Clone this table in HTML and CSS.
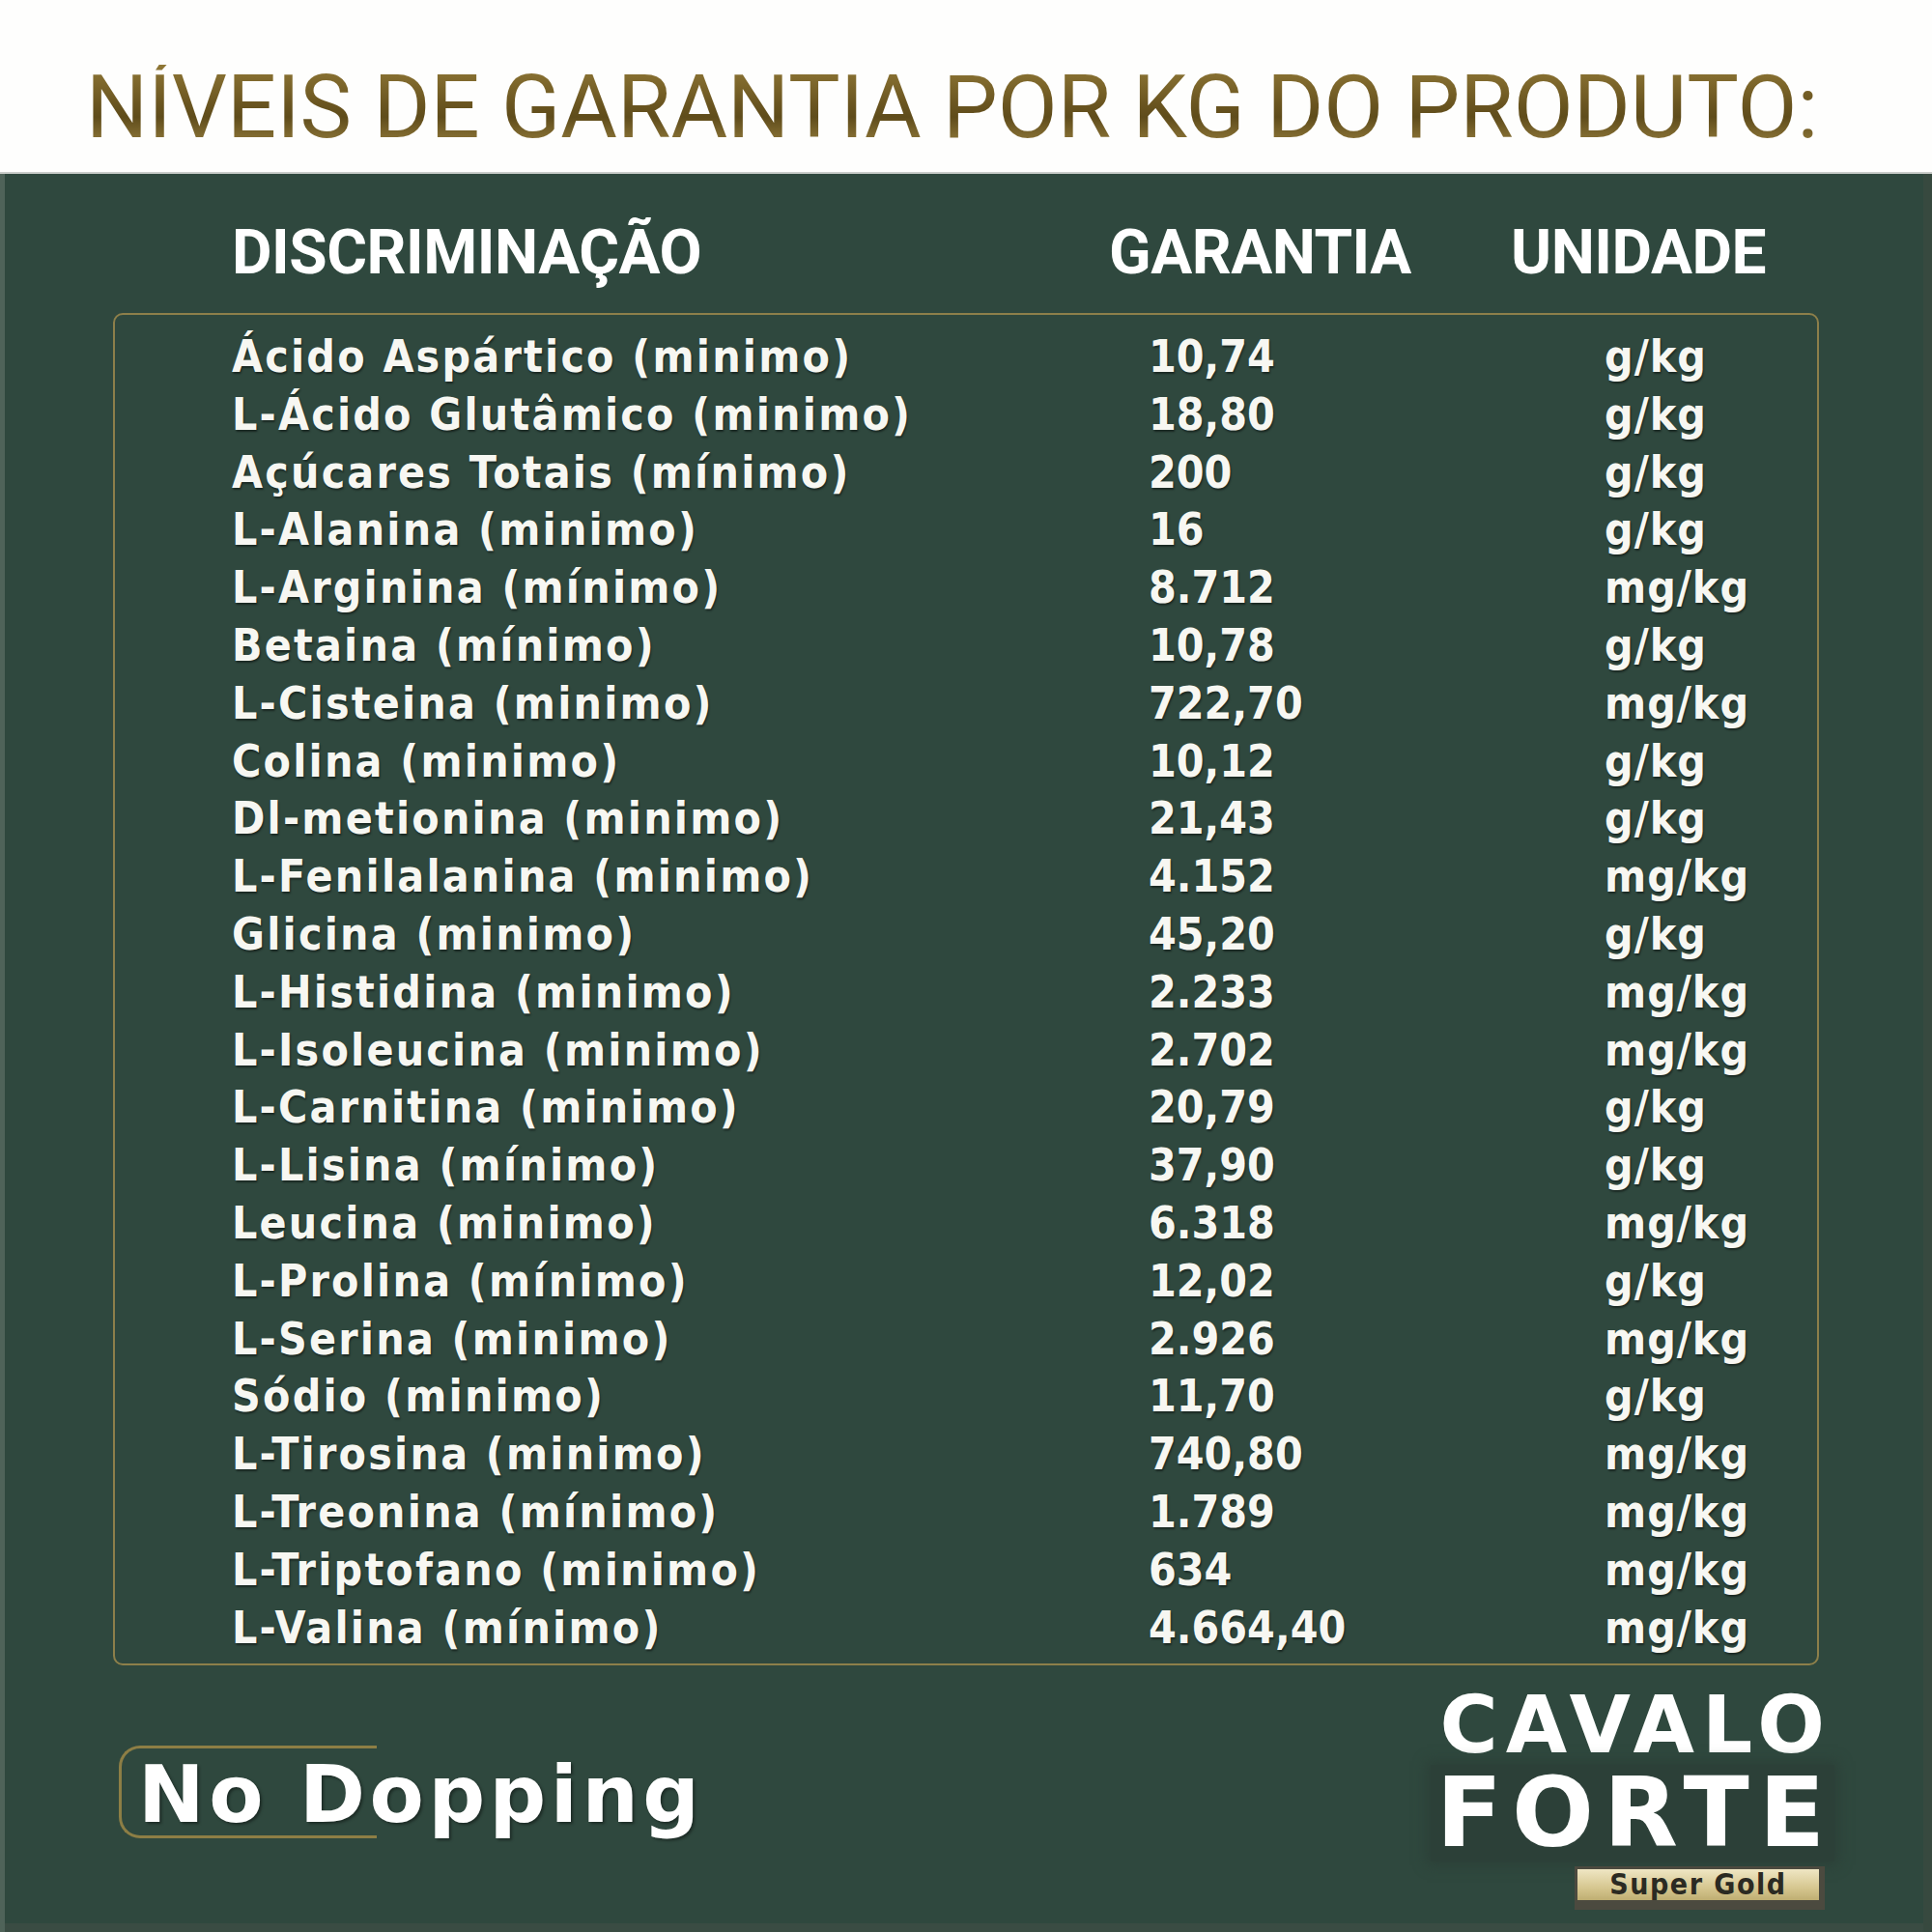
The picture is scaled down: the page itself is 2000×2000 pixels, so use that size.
FILE: index.html
```html
<!DOCTYPE html>
<html lang="pt-BR">
<head>
<meta charset="utf-8">
<title>Níveis de Garantia</title>
<link rel="stylesheet" href="styles.css">
</head>
<body>
<div class="page">
  <header class="top">
    <h1 class="title">NÍVEIS DE GARANTIA POR KG DO PRODUTO:</h1>
  </header>
  <main class="panel">
    <div class="heads">
      <span>DISCRIMINAÇÃO</span>
      <span>GARANTIA</span>
      <span>UNIDADE</span>
    </div>
    <div class="box">
      <div class="row"><span class="n">Ácido Aspártico (minimo)</span><span class="v">10,74</span><span class="u">g/kg</span></div>
      <div class="row"><span class="n">L-Ácido Glutâmico (minimo)</span><span class="v">18,80</span><span class="u">g/kg</span></div>
      <div class="row"><span class="n">Açúcares Totais (mínimo)</span><span class="v">200</span><span class="u">g/kg</span></div>
      <div class="row"><span class="n">L-Alanina (minimo)</span><span class="v">16</span><span class="u">g/kg</span></div>
      <div class="row"><span class="n">L-Arginina (mínimo)</span><span class="v">8.712</span><span class="u">mg/kg</span></div>
      <div class="row"><span class="n">Betaina (mínimo)</span><span class="v">10,78</span><span class="u">g/kg</span></div>
      <div class="row"><span class="n">L-Cisteina (minimo)</span><span class="v">722,70</span><span class="u">mg/kg</span></div>
      <div class="row"><span class="n">Colina (minimo)</span><span class="v">10,12</span><span class="u">g/kg</span></div>
      <div class="row"><span class="n">Dl-metionina (minimo)</span><span class="v">21,43</span><span class="u">g/kg</span></div>
      <div class="row"><span class="n">L-Fenilalanina (minimo)</span><span class="v">4.152</span><span class="u">mg/kg</span></div>
      <div class="row"><span class="n">Glicina (minimo)</span><span class="v">45,20</span><span class="u">g/kg</span></div>
      <div class="row"><span class="n">L-Histidina (minimo)</span><span class="v">2.233</span><span class="u">mg/kg</span></div>
      <div class="row"><span class="n">L-Isoleucina (minimo)</span><span class="v">2.702</span><span class="u">mg/kg</span></div>
      <div class="row"><span class="n">L-Carnitina (minimo)</span><span class="v">20,79</span><span class="u">g/kg</span></div>
      <div class="row"><span class="n">L-Lisina (mínimo)</span><span class="v">37,90</span><span class="u">g/kg</span></div>
      <div class="row"><span class="n">Leucina (minimo)</span><span class="v">6.318</span><span class="u">mg/kg</span></div>
      <div class="row"><span class="n">L-Prolina (mínimo)</span><span class="v">12,02</span><span class="u">g/kg</span></div>
      <div class="row"><span class="n">L-Serina (minimo)</span><span class="v">2.926</span><span class="u">mg/kg</span></div>
      <div class="row"><span class="n">Sódio (minimo)</span><span class="v">11,70</span><span class="u">g/kg</span></div>
      <div class="row"><span class="n">L-Tirosina (minimo)</span><span class="v">740,80</span><span class="u">mg/kg</span></div>
      <div class="row"><span class="n">L-Treonina (mínimo)</span><span class="v">1.789</span><span class="u">mg/kg</span></div>
      <div class="row"><span class="n">L-Triptofano (minimo)</span><span class="v">634</span><span class="u">mg/kg</span></div>
      <div class="row"><span class="n">L-Valina (mínimo)</span><span class="v">4.664,40</span><span class="u">mg/kg</span></div>
    </div>
    <div class="foot">
      <div class="nodop">No Dopping</div>
      <div class="logo">
        <div class="cavalo">CAVALO</div>
        <div class="forte">FORTE</div>
        <div class="badge"><span class="plate">Super Gold</span></div>
      </div>
    </div>
  </main>
</div>
</body>
</html>
```
FILE: styles.css
```css
html, body {
  margin: 0;
  padding: 0;
  background: #ffffff;
}
.page {
  width: 2000px;
  height: 2000px;
  overflow: hidden;
  display: flex;
  flex-direction: column;
}
.top {
  box-sizing: border-box;
  height: 180px;
  padding: 67px 0 0 89px;
  background: #fefefd;
  border-bottom: 2px solid #c9ccc9;
}
.title {
  margin: 0;
  font-family: Roboto, "Liberation Sans", sans-serif;
  font-weight: 400;
  font-size: 90px;
  line-height: 1;
  white-space: nowrap;
  color: #6f5b25;
  background: linear-gradient(180deg, #8f7736 0%, #6a5520 45%, #5f4c1b 60%, #9c8342 100%);
  -webkit-background-clip: text;
  background-clip: text;
  -webkit-text-fill-color: transparent;
}
.panel {
  flex: 1;
  background: #2f483e;
  box-shadow: inset 5px 0 0 #4f6359, inset -9px 0 0 #37493f, inset 0 -9px 0 #3a4c43;
  padding-top: 50px;
  color: #f7f7f2;
}
.heads {
  display: grid;
  grid-template-columns: 908px 416px auto;
  padding-left: 240px;
  font-family: Roboto, "Liberation Sans", sans-serif;
  font-weight: 700;
  font-size: 64px;
  line-height: 1;
  letter-spacing: -0.5px;
  color: #ffffff;
}
.box {
  box-sizing: border-box;
  margin: 30px 117px 0 117px;
  height: 1400px;
  border: 2px solid #8d7f4a;
  border-radius: 10px;
  padding: 14px 0 0 121px;
}
.row {
  display: grid;
  grid-template-columns: 949px 472px auto;
  height: 59.8px;
  line-height: 59.8px;
  font-family: "DejaVu Sans Condensed", "DejaVu Sans", sans-serif;
  font-weight: 700;
  font-size: 46px;
  white-space: nowrap;
  text-shadow: 1px 2px 2px rgba(0, 0, 0, 0.45);
}
.n {
  letter-spacing: 2.2px;
}
.u {
  letter-spacing: 1px;
}
.foot {
  display: flex;
  justify-content: space-between;
  align-items: flex-start;
  margin-top: 21px;
  padding: 0 111px 0 123px;
}
.nodop {
  box-sizing: border-box;
  width: 267px;
  margin-top: 62px;
  padding: 8px 0 2px 17px;
  border: 3px solid #8d7e45;
  border-right: none;
  border-radius: 22px 0 0 22px;
  white-space: nowrap;
  font-family: "DejaVu Sans", sans-serif;
  font-weight: 700;
  font-size: 82px;
  line-height: 80px;
  letter-spacing: 4.5px;
  color: #ffffff;
  text-shadow: 2px 2px 3px rgba(0, 0, 0, 0.4);
}
.logo {
  display: flex;
  flex-direction: column;
  align-items: flex-end;
  font-family: "DejaVu Sans", sans-serif;
  font-weight: 700;
  color: #ffffff;
}
.cavalo {
  font-size: 82px;
  line-height: 1;
  letter-spacing: 8px;
  margin-right: -8px;
}
.forte {
  font-size: 100px;
  line-height: 1;
  letter-spacing: 10px;
  margin-right: -10px;
  padding-left: 6px;
  background: #2c4038;
  box-shadow: 0 0 12px 4px #2c4038;
}
.badge {
  box-sizing: border-box;
  margin-top: 5px;
  width: 259px;
  height: 45px;
  padding: 3px 6px 10px 3px;
  background: #4b4a3f;
  display: flex;
}
.plate {
  flex: 1;
  background: linear-gradient(180deg, #efe6c4 0%, #d6c790 60%, #bfae72 100%);
  font-family: "DejaVu Sans Condensed", "DejaVu Sans", sans-serif;
  font-weight: 700;
  font-size: 30px;
  line-height: 32px;
  letter-spacing: 1.5px;
  color: #2b2a22;
  text-align: center;
}
```
